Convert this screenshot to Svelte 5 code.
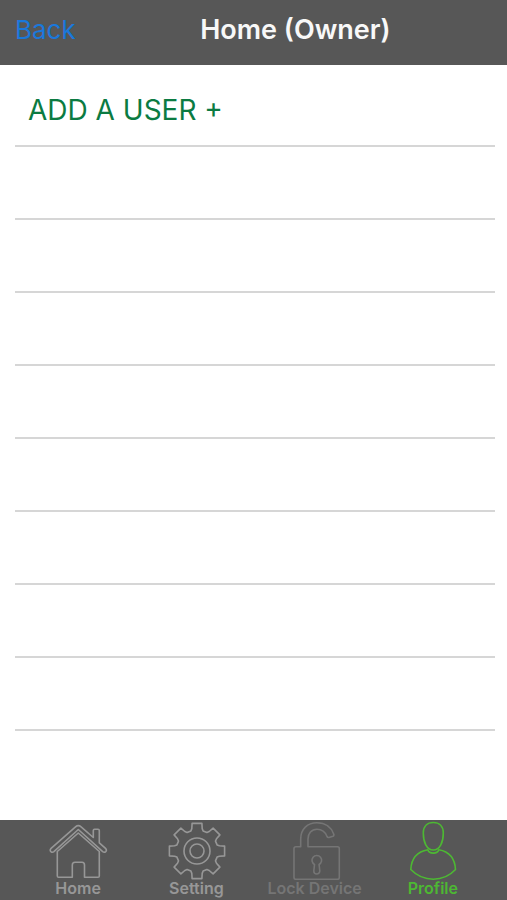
<script>
  const emptyRows = new Array(8).fill(null);

  const tabs = [
    { id: "home", label: "Home" },
    { id: "setting", label: "Setting" },
    { id: "lock", label: "Lock Device" },
    { id: "profile", label: "Profile" },
  ];

  let active = "profile";

  // eight teeth, six corners each, as [angle, radius]
  function gearPoints() {
    const corners = [[-17, 21], [-13, 23], [-10, 28], [10, 28], [13, 23], [17, 21]];
    const points = [];
    for (let tooth = 0; tooth < 8; tooth++) {
      for (const [offset, radius] of corners) {
        const angle = ((tooth * 45 + offset) * Math.PI) / 180;
        const x = 31 + radius * Math.sin(angle);
        const y = 31 - radius * Math.cos(angle);
        points.push(`${x.toFixed(1)},${y.toFixed(1)}`);
      }
    }
    return points.join(" ");
  }
</script>

<style>
  :global(body) {
    margin: 0;
  }
  .screen {
    display: flex;
    flex-direction: column;
    min-height: 100vh;
    background: #fff;
    font-family: Inter, "Liberation Sans", sans-serif;
  }
  button {
    margin: 0;
    padding: 0;
    border: 0;
    background: none;
    font-family: inherit;
    cursor: pointer;
  }
  header {
    display: flex;
    align-items: center;
    gap: 8px;
    box-sizing: border-box;
    height: 65px;
    padding: 0 0 6px 15px;
    background: #575757;
  }
  .back {
    color: #1a78dc;
    font-size: 26px;
    line-height: 32px;
    text-decoration: none;
  }
  h1 {
    flex: 1;
    margin: 0;
    color: #f8f8f8;
    font-size: 27px;
    font-weight: 600;
    line-height: 32px;
    text-align: center;
  }
  main {
    flex: 1;
    padding: 9px 12px 0 15px;
  }
  ul {
    margin: 0;
    padding: 0;
    list-style: none;
  }
  li {
    display: flex;
    align-items: center;
    box-sizing: border-box;
    height: 73px;
    border-bottom: 2px solid #d6d6d6;
  }
  .add {
    padding-left: 13px;
    color: #0b7b42;
    font-size: 28px;
    line-height: 36px;
  }
  nav {
    display: grid;
    grid-template-columns: repeat(4, 1fr);
    padding: 0 15px 4px 19px;
    background: #575757;
  }
  .tab {
    display: flex;
    flex-direction: column;
    align-items: center;
    color: #979797;
    font-size: 16px;
    font-weight: 600;
    line-height: 16px;
    white-space: nowrap;
  }
  .tab.dim {
    color: #757575;
  }
  .tab.active {
    color: #4db833;
  }
  svg {
    display: block;
    width: 60px;
    height: 60px;
    fill: none;
    stroke: currentColor;
    stroke-width: 1.6;
    stroke-linejoin: round;
    stroke-linecap: round;
  }
</style>

<div class="screen">
  <header>
    <a class="back" href="#back">Back</a>
    <h1>Home (Owner)</h1>
  </header>

  <main>
    <ul>
      <li><button class="add">ADD A USER +</button></li>
      {#each emptyRows as _}
        <li></li>
      {/each}
    </ul>
  </main>

  <nav>
    {#each tabs as tab}
      <button
        class="tab"
        class:active={tab.id === active}
        class:dim={tab.id === "lock"}
        on:click={() => (active = tab.id)}>
        <svg viewBox="0 0 60 60" aria-hidden="true">
          {#if tab.id === "home"}
            <path d="M27.5 6.8Q30.3 4.4 33.1 6.8L45.3 17.5V10.5Q45.3 9.3 46.5 9.3H50Q51.3 9.3 51.3 10.5V22.8L57.8 28.7Q59 30.3 57.7 31.6Q56.3 32.9 54.7 31.7L30.3 9.5L5.9 31.7Q4.3 32.9 2.9 31.6Q1.6 30.3 2.8 28.7Z" />
            <path d="M9.3 31.5L30.3 13L51.3 31.5V56Q51.3 57.3 50 57.3H36.5V45Q36.5 42.3 34 42.3H27Q24.3 42.3 24.3 45V57.3H10.6Q9.3 57.3 9.3 56Z" />
          {:else if tab.id === "setting"}
            <polygon points={gearPoints()} />
            <circle cx="31" cy="31" r="13" />
            <circle cx="31" cy="31" r="7" />
          {:else if tab.id === "lock"}
            <path d="M23 26.7H52.5Q54.3 26.7 54.3 28.5V57.5Q54.3 59.3 52.5 59.3H10.8Q9 59.3 9 57.5V28.5Q9 26.7 10.8 26.7H15.7V19C15.7 9 22.5 2.7 32 2.7C40.5 2.7 46.5 7.5 48.8 14.2Q49.2 15.6 48 16.2L44 17.5Q42.7 17.8 42 16.5C40.3 12 37 9.3 32 9.3C26.5 9.3 23 13.5 23 19Z" />
            <path d="M29.5 44.5A4.8 4.8 0 1 1 34.1 44.5L34.8 51A3 3 0 0 1 28.8 51Z" />
          {:else}
            <path d="M30.3 2.5C36.5 2.5 40.3 6.5 40.3 13C40.3 22 37 30 30.3 30C23.6 30 20.3 22 20.3 13C20.3 6.5 24.1 2.5 30.3 2.5Z" />
            <path d="M24.8 29.8C15 31.5 8.5 37.5 7.8 49.5C14.5 56.5 21.5 59.2 30.3 59.2C39 59.2 46 56.5 52.5 49.5C51.8 37.5 45.5 31.5 35.8 29.8C34.5 34.2 26.1 34.2 24.8 29.8Z" />
          {/if}
        </svg>
        {tab.label}
      </button>
    {/each}
  </nav>
</div>
